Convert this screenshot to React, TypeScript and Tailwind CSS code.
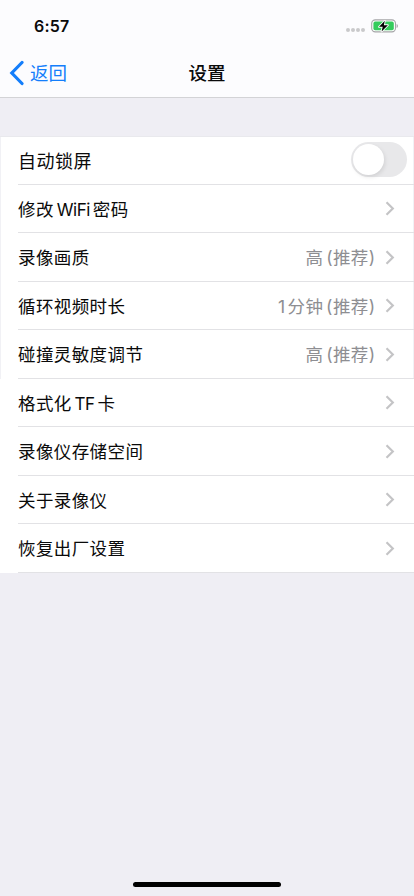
import { useState } from "react";

interface SettingItem {
  id: string;
  label: string;
  value?: string;
}

const items: SettingItem[] = [
  { id: "wifi", label: "修改 WiFi 密码" },
  { id: "quality", label: "录像画质", value: "高 (推荐)" },
  { id: "loop", label: "循环视频时长", value: "1分钟 (推荐)" },
  { id: "collision", label: "碰撞灵敏度调节", value: "高 (推荐)" },
  { id: "format", label: "格式化 TF 卡" },
  { id: "storage", label: "录像仪存储空间" },
  { id: "about", label: "关于录像仪" },
  { id: "reset", label: "恢复出厂设置" },
];

function BatteryIcon() {
  return (
    <svg width="27" height="14" viewBox="0 0 27 14" fill="none">
      <rect x="0.7" y="0.9" width="23.8" height="12" rx="3.6" fill="#fff" stroke="#a5a5a8" strokeWidth="1.1" />
      <rect x="2.4" y="2.6" width="20.4" height="8.6" rx="1.8" fill="#34cb5c" />
      <path d="M25.600 5v4c.8-.3 1.300-1.100 1.300-2s-.5-1.700-1.300-2z" fill="#a5a5a8" />
      <path
        d="M13.800 1.800 8 7.800h3.700l-1.100 4.600 6.300-6.200h-4z"
        fill="#000"
        stroke="#fff"
        strokeWidth="1.800"
        strokeLinejoin="round"
        paintOrder="stroke"
      />
    </svg>
  );
}

function StatusBar() {
  return (
    <div className="flex h-[49px] items-center justify-between pt-[2px] pr-[16px] pl-[34px]">
      <span className="font-['Inter','Liberation_Sans',sans-serif] text-[16px] font-semibold tracking-[0.200px]">
        6:57
      </span>
      <div className="flex items-center gap-[6px]">
        <div className="flex gap-[1px] pt-[8px]">
          {[0, 1, 2, 3].map((dot) => (
            <span key={dot} className="size-[4px] rounded-full bg-[#c9c9cb]" />
          ))}
        </div>
        <BatteryIcon />
      </div>
    </div>
  );
}

function Chevron() {
  return (
    <svg width="10" height="16" viewBox="0 0 10 16" fill="none" className="shrink-0">
      <path d="M1.500 2.300 7.800 8.500 1.500 14.700" stroke="#c4c4c6" strokeWidth="2.200" />
    </svg>
  );
}

function Label({ text }: { text: string }) {
  return (
    <>
      {text.split(/([A-Za-z]+|\d+)/).map((part, i) => {
        if (/^\d/.test(part)) {
          return (
            <span key={i} className="mr-[2px]">
              {part}
            </span>
          );
        }
        if (/^[A-Za-z]/.test(part)) {
          return (
            <span key={i} className="text-[17px] tracking-[-0.400px]">
              {part}
            </span>
          );
        }
        return part;
      })}
    </>
  );
}

export default function App() {
  const [autoLock, setAutoLock] = useState(false);

  return (
    <div className="flex h-[896px] w-[414px] flex-col overflow-hidden bg-[#efeef4] font-['Inter','Noto_Sans_CJK_SC',sans-serif] text-[#0a0a0a]">
      {/* Header */}
      <header className="h-[98px] shrink-0 border-b border-[#d3d3d6] bg-[#fcfcfe]">
        <StatusBar />
        <nav className="grid h-12 grid-cols-3 items-center">
          <button className="flex items-center gap-[6px] pl-[9px] text-[18.500px] text-[#147efb]">
            <svg width="15" height="26" viewBox="0 0 15 26" fill="none">
              <path d="M13 2.500 2.800 13 13 23.500" stroke="#147efb" strokeWidth="3.200" strokeLinecap="round" />
            </svg>
            <span className="leading-6">返回</span>
          </button>
          <h1 className="text-center text-[18.500px] leading-6 font-medium">设置</h1>
        </nav>
      </header>

      {/* Settings list */}
      <main className="mt-[38px] border-t border-[#e9e9ed] bg-white">
        <div className="flex h-[47.500px] border-x border-[#f1f1f5] pl-[17px]">
          <div className="-mr-px flex flex-1 items-center justify-between border-b border-[#e2e2e5] pr-[7px]">
            <span className="pt-[2px] text-[18px] tracking-[0.500px]">自动锁屏</span>
            <button
              role="switch"
              aria-checked={autoLock}
              aria-label="自动锁屏"
              onClick={() => setAutoLock(!autoLock)}
              className={`mb-[2px] flex h-[35px] w-[56px] items-center rounded-full p-[2px] ${
                autoLock ? "justify-end bg-[#34c759]" : "bg-[#e8e8ea]"
              }`}
            >
              <span className="size-[31px] rounded-full bg-white shadow-[1px_2px_4px_rgba(0,0,0,0.10)]" />
            </button>
          </div>
        </div>

        {items.map((item, i) => (
          <div
            key={item.id}
            className={`flex h-[48.500px] border-x pl-[17px] ${i < 4 ? "border-[#f1f1f5]" : "border-white"}`}
          >
            <div className="-mr-px flex flex-1 items-center border-b border-[#e2e2e5] pr-[19px] text-[17.500px] tracking-[0.400px] [word-spacing:-2.500px]">
              <span className="flex-1 pt-[3px]">
                <Label text={item.label} />
              </span>
              {item.value && (
                <span className="mr-[9.500px] pt-[3px] text-[#8e8e92]">
                  <Label text={item.value} />
                </span>
              )}
              <Chevron />
            </div>
          </div>
        ))}
      </main>

      {/* Home indicator */}
      <div className="mx-auto mt-auto mb-[9px] h-[5px] w-[148px] shrink-0 rounded-full bg-black" />
    </div>
  );
}
